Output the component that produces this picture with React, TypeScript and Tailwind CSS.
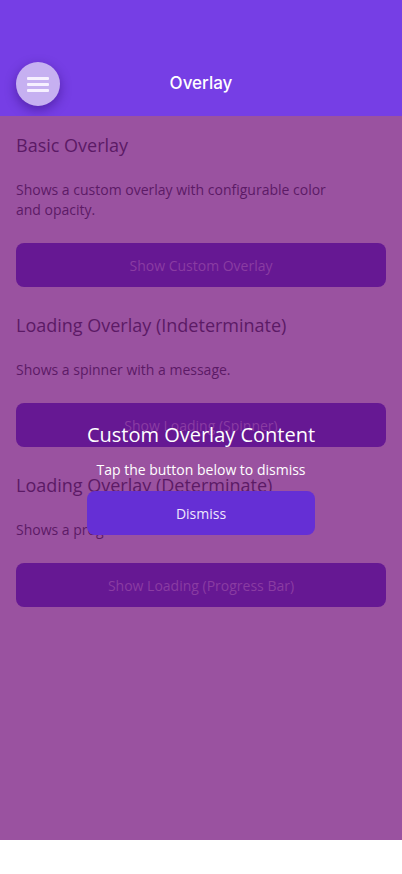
const sections = [
  {
    title: "Basic Overlay",
    desc: "Shows a custom overlay with configurable color and opacity.",
    button: "Show Custom Overlay",
  },
  {
    title: "Loading Overlay (Indeterminate)",
    desc: "Shows a spinner with a message.",
    button: "Show Loading (Spinner)",
  },
  {
    title: "Loading Overlay (Determinate)",
    desc: "Shows a progress bar.",
    button: "Show Loading (Progress Bar)",
  },
];

function MenuButton() {
  return (
    <button className="flex h-11 w-11 items-center justify-center rounded-full bg-[#c6b0f1] shadow-[0_4px_12px_rgba(40,0,100,0.45)]">
      <svg width="22" height="18" viewBox="0 0 22 18" fill="none">
        <rect x="0" y="2" width="22" height="3" rx="1" fill="#f6f0ff" />
        <rect x="0" y="8" width="22" height="3" rx="1" fill="#f6f0ff" />
        <rect x="0" y="14" width="22" height="3" rx="1" fill="#f6f0ff" />
      </svg>
    </button>
  );
}

export default function App() {
  return (
    <div className="flex h-[874px] w-full flex-col bg-white font-['Open_Sans',sans-serif]">
      <header className="relative flex h-[116px] shrink-0 items-end bg-[#763ee5] px-4 pb-[10px]">
        <MenuButton />
        <h1 className="absolute bottom-[20px] left-0 right-0 text-center font-['Inter',sans-serif] text-[17px] font-medium text-white">
          Overlay
        </h1>
      </header>

      <main className="relative flex-1 bg-[#9a52a0] px-4 pt-4">
        {sections.map((s) => (
          <section key={s.title} className="mb-[25px] flex flex-col">
            <h2 className="mb-[22px] text-[18px] leading-[26px] text-[#5c1a66]">
              {s.title}
            </h2>
            <p className="mb-[23px] max-w-[320px] text-[14px] leading-[20px] text-[#5c1a66]">
              {s.desc}
            </p>
            <button className="h-11 w-full rounded-lg bg-[#661893] text-[14px] text-[#8a3ca2]">
              {s.button}
            </button>
          </section>
        ))}

        {/* overlay content sits above the dimmed page */}
        <div className="absolute inset-0 flex items-center justify-center">
          <div className="flex flex-col items-stretch">
            <p className="text-center text-[20px] leading-[28px] text-white">
              Custom Overlay Content
            </p>
            <p className="mt-[11px] text-center text-[14px] leading-[20px] text-white">
              Tap the button below to dismiss
            </p>
            <button className="mt-[11px] h-11 rounded-lg bg-[#652fd5] text-[14px] text-[#efe7fc]">
              Dismiss
            </button>
          </div>
        </div>
      </main>

      <div className="h-[34px] shrink-0 bg-white" />
    </div>
  );
}
